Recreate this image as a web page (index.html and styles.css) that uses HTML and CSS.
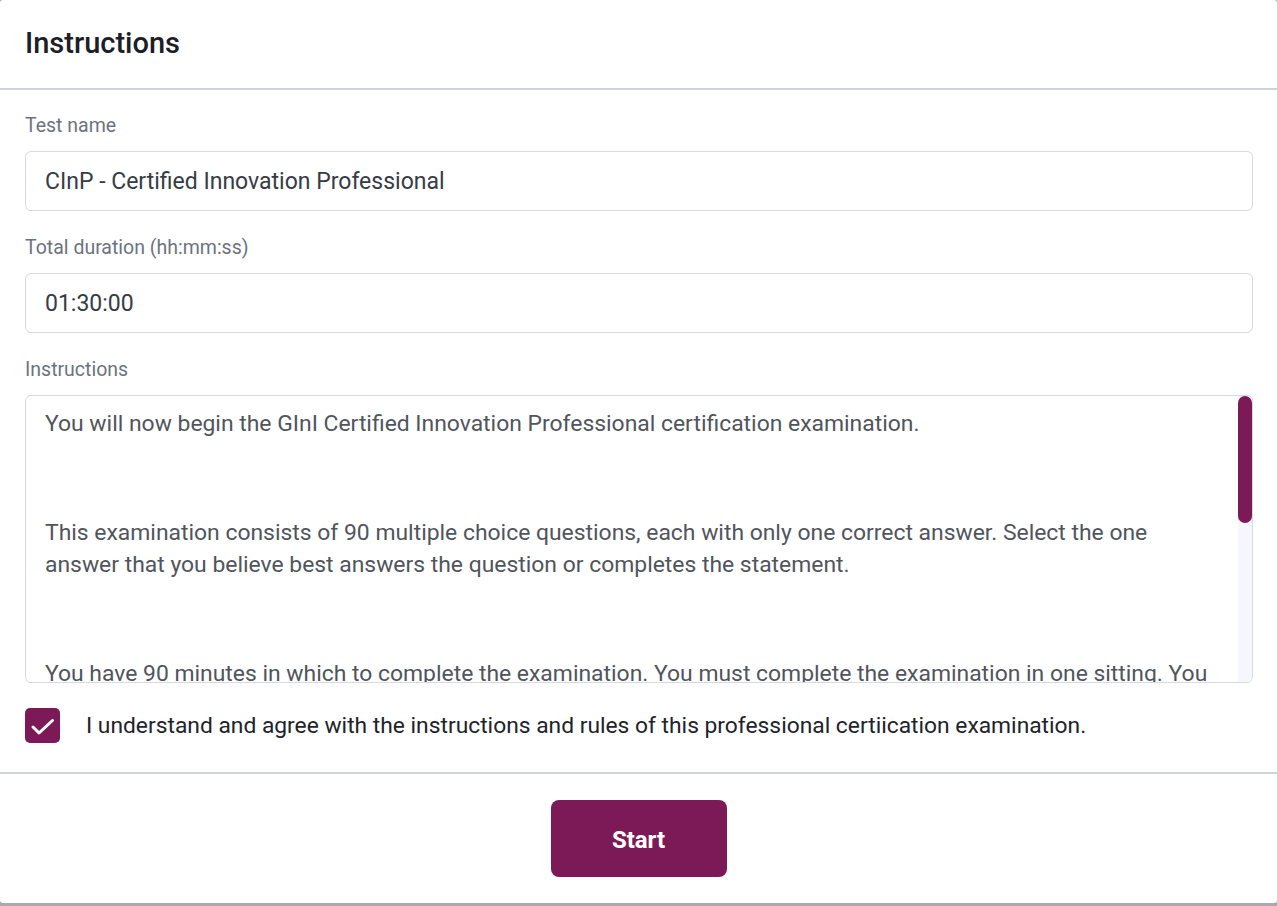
FILE: index.html
```html
<!DOCTYPE html>
<html lang="en">
<head>
<meta charset="utf-8">
<title>Instructions</title>
<link rel="stylesheet" href="styles.css">
</head>
<body>
<div class="modal">
  <header class="modal-header">
    <h1 class="modal-title">Instructions</h1>
  </header>
  <main class="modal-body">
    <div class="field">
      <label class="field-label">Test name</label>
      <div class="field-input">CInP - Certified Innovation Professional</div>
    </div>
    <div class="field">
      <label class="field-label">Total duration (hh:mm:ss)</label>
      <div class="field-input">01:30:00</div>
    </div>
    <div class="field">
      <label class="field-label">Instructions</label>
      <div class="field-text">
        <div class="text-content">
          <p>You will now begin the GInI Certified Innovation Professional certification examination.</p>
          <p>This examination consists of 90 multiple choice questions, each with only one correct answer. Select the one answer that you believe best answers the question or completes the statement.</p>
          <p>You have 90 minutes in which to complete the examination. You must complete the examination in one sitting. You cannot pause the examination once it has been started.</p>
          <p>Unanswered questions will be marked as incorrect. You may review and change your answers at any time before submitting the examination.</p>
        </div>
        <div class="scroll-track"><div class="scroll-thumb"></div></div>
      </div>
    </div>
    <label class="agree">
      <span class="checkbox">
        <svg viewBox="0 0 35 35" width="35" height="35"><path d="M8 19L14 25L27.5 12.5" fill="none" stroke="#fff" stroke-width="3" stroke-linecap="round" stroke-linejoin="round"/></svg>
      </span>
      <span class="agree-text">I understand and agree with the instructions and rules of this professional certiication examination.</span>
    </label>
  </main>
  <footer class="modal-footer">
    <button class="btn-start" type="button">Start</button>
  </footer>
</div>
</body>
</html>
```

FILE: styles.css
```css
* { box-sizing: border-box; }
html, body { margin: 0; padding: 0; }
body {
  background: #a9aaac;
  font-family: Roboto, "Liberation Sans", Arial, sans-serif;
  height: 906px;
  overflow: hidden;
}
.modal {
  background: #fff;
  height: 903px;
  border-radius: 3px;
  display: flex;
  flex-direction: column;
}
.modal-header {
  height: 90px;
  border-bottom: 2px solid #cfd3d8;
  padding: 0 25px;
  display: flex;
  align-items: center;
}
.modal-title {
  margin: 0;
  font-size: 29px;
  font-weight: 500;
  color: #1b2028;
  padding-bottom: 3px;
}
.modal-body {
  padding: 25px 24px 0 25px;
  display: flex;
  flex-direction: column;
  border-bottom: 2px solid #cfd3d8;
}
.field { display: flex; flex-direction: column; }
.field-label {
  font-size: 19.5px;
  color: #6b7380;
  line-height: 22px;
  margin-bottom: 14px;
}
.field-input {
  height: 60px;
  border: 1px solid #d6dade;
  border-radius: 6px;
  padding: 0 19px;
  display: flex;
  align-items: center;
  font-size: 23px;
  color: #363c45;
  margin-bottom: 26px;
}
.field-text {
  height: 288px;
  border: 1px solid #d6dade;
  border-radius: 6px;
  display: flex;
  overflow: hidden;
}
.text-content {
  flex: 1;
  padding: 12px 20px 0 19px;
  font-size: 22.9px;
  line-height: 32px;
  color: #50555d;
  overflow: hidden;
}
.text-content p { margin: 0 0 77px; }
.scroll-track {
  width: 14px;
  flex: none;
  background: #f5f7fc;
}
.scroll-thumb {
  height: 127px;
  background: #7b1a57;
  border-radius: 7px;
}
.agree {
  display: flex;
  align-items: center;
  gap: 26px;
  padding: 25px 0 29px;
}
.checkbox {
  width: 35px;
  height: 35px;
  border-radius: 5px;
  background: #7b1a57;
  display: flex;
  flex: none;
}
.agree-text {
  font-size: 22.8px;
  color: #1e232b;
}
.modal-footer {
  flex: 1;
  display: flex;
  justify-content: center;
  align-items: flex-start;
  padding-top: 26px;
}
.btn-start {
  width: 176px;
  height: 77px;
  border: none;
  border-radius: 8px;
  background: #7b1a57;
  color: #fff;
  font-family: Roboto, "Liberation Sans", Arial, sans-serif;
  font-size: 24px;
  font-weight: 700;
  padding: 3px 0 0;
}
```
